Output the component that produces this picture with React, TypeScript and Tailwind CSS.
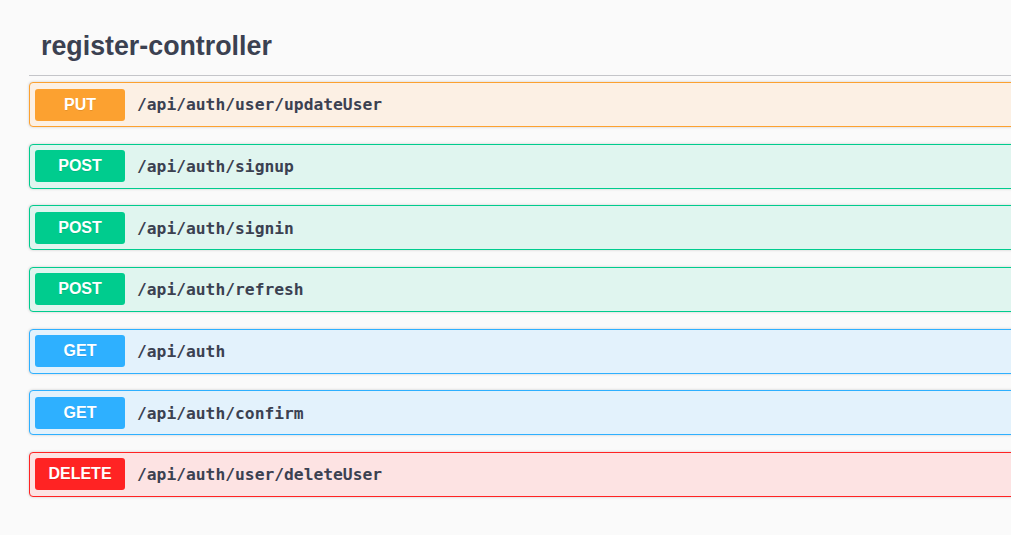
import React from "react";

const ops = [
  { m: "PUT", p: "/api/auth/user/updateUser", badge: "bg-[#fca130]", border: "border-[#fca130]", bg: "bg-[#fcf0e4]" },
  { m: "POST", p: "/api/auth/signup", badge: "bg-[#00cc8e]", border: "border-[#00cc8e]", bg: "bg-[#e0f5ef]" },
  { m: "POST", p: "/api/auth/signin", badge: "bg-[#00cc8e]", border: "border-[#00cc8e]", bg: "bg-[#e0f5ef]" },
  { m: "POST", p: "/api/auth/refresh", badge: "bg-[#00cc8e]", border: "border-[#00cc8e]", bg: "bg-[#e0f5ef]" },
  { m: "GET", p: "/api/auth", badge: "bg-[#2eb0ff]", border: "border-[#2eb0ff]", bg: "bg-[#e3f2fc]" },
  { m: "GET", p: "/api/auth/confirm", badge: "bg-[#2eb0ff]", border: "border-[#2eb0ff]", bg: "bg-[#e3f2fc]" },
  { m: "DELETE", p: "/api/auth/user/deleteUser", badge: "bg-[#ff2323]", border: "border-[#ff2323]", bg: "bg-[#fde3e3]" },
];

export default function App() {
  return (
    <div className="w-[1011px] h-[535px] overflow-hidden bg-[#fafafa] text-[#3b4151]">
      <div className="ml-[29px] w-[1000px]">
        <h3
          className="pl-[12px] pt-[29px] pb-[12px] border-b border-[#c4c5c9] text-[26.8px] leading-[34px] font-bold text-[#3b4151]"
          style={{ fontFamily: '"Liberation Sans", Arial, sans-serif' }}
        >
          register-controller
        </h3>
        <div className="mt-[6px] flex flex-col gap-[16.67px]">
          {ops.map((o, i) => (
            <div
              key={i}
              className={`h-[45px] flex items-center px-[5px] border ${o.border} ${o.bg} rounded-[4px] shadow-[0_0_3px_rgba(0,0,0,0.19)]`}
            >
              <div
                className={`w-[90px] h-[32px] flex items-center justify-center rounded-[3px] ${o.badge} text-white text-[16px] font-bold [text-shadow:0_1px_0_rgba(0,0,0,0.1)]`}
                style={{ fontFamily: '"Liberation Sans", Arial, sans-serif' }}
              >
                {o.m}
              </div>
              <span
                className="ml-[12px] mt-[2px] text-[16.3px] font-bold text-[#3b4151]"
                style={{ fontFamily: '"DejaVu Sans Mono", monospace' }}
              >
                {o.p}
              </span>
            </div>
          ))}
        </div>
      </div>
    </div>
  );
}
